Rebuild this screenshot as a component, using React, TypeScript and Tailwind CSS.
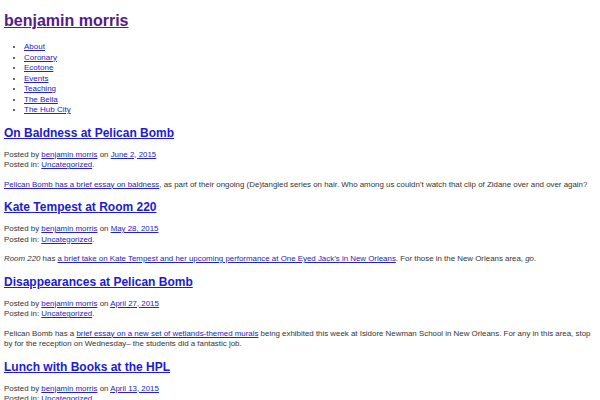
const pages = ["About", "Coronary", "Ecotone", "Events", "Teaching", "The Bella", "The Hub City"];

function Meta({ date }: { date: string }) {
  return (
    <div className="mt-[9px] mb-[9px]">
      <p>
        Posted by <a href="#" className="text-[#2323c8] underline">benjamin morris</a> on{" "}
        <a href="#" className="text-[#2323c8] underline">{date}</a>
      </p>
      <p>
        Posted in: <a href="#" className="text-[#2323c8] underline">Uncategorized</a>.
      </p>
    </div>
  );
}

function PostTitle({ children }: { children: React.ReactNode }) {
  return (
    <h2 className="mt-[9px] text-[12px] font-bold leading-[16px]">
      <a href="#" className="text-[#1b1bd6] underline">{children}</a>
    </h2>
  );
}

export default function App() {
  return (
    <div className="min-h-[400px] bg-white pl-[4px] pr-[1px] pt-[11px] text-[7.9px] leading-[10.5px] text-[#333] [font-family:'Liberation_Sans',Arial,sans-serif]">
      <h1 className="text-[16px] font-bold leading-[20px]">
        <a href="#" className="text-[#551a8b] underline">benjamin morris</a>
      </h1>

      <ul className="mt-[11px] list-disc pl-[20px] text-[8px]">
        {pages.map((p) => (
          <li key={p}>
            <a href="#" className="text-[#2323c8] underline">{p}</a>
          </li>
        ))}
      </ul>

      <PostTitle>On Baldness at Pelican Bomb</PostTitle>
      <Meta date="June 2, 2015" />
      <p>
        <a href="#" className="text-[#2323c8] underline">Pelican Bomb has a brief essay on baldness</a>, as part of
        their ongoing (De)tangled series on hair. Who among us couldn’t watch that clip of Zidane over and over again?
      </p>

      <PostTitle>Kate Tempest at Room 220</PostTitle>
      <Meta date="May 28, 2015" />
      <p>
        <em>Room 220</em> has{" "}
        <a href="#" className="text-[#2323c8] underline">
          a brief take on Kate Tempest and her upcoming performance at One Eyed Jack’s in New Orleans
        </a>
        . For those in the New Orleans area, <em>go</em>.
      </p>

      <PostTitle>Disappearances at Pelican Bomb</PostTitle>
      <Meta date="April 27, 2015" />
      <p>
        Pelican Bomb has a{" "}
        <a href="#" className="text-[#2323c8] underline">brief essay on a new set of wetlands-themed murals</a> being
        exhibited this week at Isidore Newman School in New Orleans. For any in this area, stop by for the reception on
        Wednesday– the students did a fantastic job.
      </p>

      <PostTitle>Lunch with Books at the HPL</PostTitle>
      <Meta date="April 13, 2015" />
    </div>
  );
}
